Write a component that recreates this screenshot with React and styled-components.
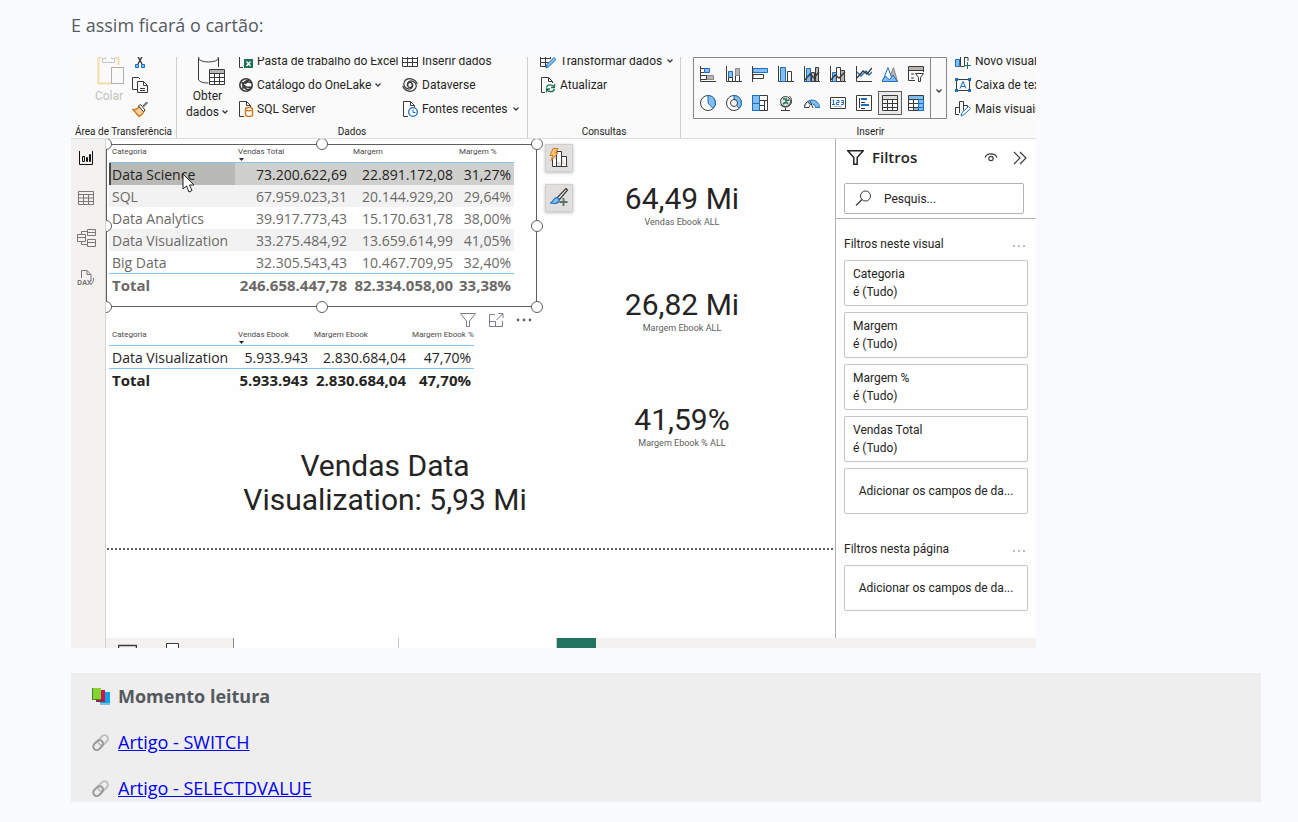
import React from 'react'
import styled, { createGlobalStyle, css } from 'styled-components'

const DARK = '#3b3a39'
const BLUE = '#1b6ec2'
const SKY = '#83beec'
const GREY = '#b8b5b2'
const GREEN = '#1e7058'
const ORANGE = '#d07a1c'

const GlobalStyle = createGlobalStyle`
  * {
    box-sizing: border-box;
  }

  body {
    margin: 0;
    background: #fafbfe;
    color: #555a5e;
    font-family: 'Open Sans', 'Noto Sans', sans-serif;
    font-size: 18px;
    line-height: 27px;
  }

  button, input {
    font: inherit;
    color: inherit;
  }

  svg {
    display: block;
    flex: none;
  }
`

const Page = styled.main`
  padding: 12px 37px 20px 71px;
`

const Intro = styled.p`
  margin: 0 0 18px;
`

const Window = styled.section`
  max-width: 965px;
  margin-bottom: 25px;
  overflow: hidden;
  background: #fefefe;
  color: #252423;
  font-family: Roboto, 'Open Sans', sans-serif;
  font-size: 12px;
  line-height: 16px;
`

/* ribbon */

const Ribbon = styled.div`
  display: flex;
  align-items: flex-end;
  height: 82px;
  overflow: hidden;
  background: #fafafa;
  border-bottom: 1px solid #dcdcdc;
`

const Group = styled.div`
  flex: none;
  display: flex;
  flex-direction: column;
  width: ${({ width }) => width}px;
  height: 89px;
  border-right: 1px solid #d0cecc;
`

const GroupBody = styled.div`
  display: flex;
  height: 72px;
  padding-left: ${({ inset }) => inset}px;
`

const GroupLabel = styled.div`
  margin-top: 4px;
  font-size: 10px;
  line-height: 13px;
  text-align: center;
  white-space: nowrap;
`

const Stack = styled.div`
  display: flex;
  flex-direction: column;
  width: ${({ width }) => (width ? `${width}px` : 'auto')};
  padding-left: ${({ inset }) => inset || 0}px;
`

const Command = styled.button`
  display: flex;
  align-items: center;
  gap: ${({ gap }) => gap || 3}px;
  height: 24px;
  padding: 0;
  border: 0;
  background: none;
  text-align: left;
  white-space: nowrap;
`

const BigCommand = styled.button`
  display: flex;
  flex-direction: column;
  align-items: center;
  justify-content: flex-start;
  gap: 3px;
  width: ${({ width }) => width}px;
  padding: 0;
  border: 0;
  background: none;
  white-space: nowrap;
  color: ${({ disabled }) => (disabled ? '#c4c2c0' : 'inherit')};

  span {
    display: flex;
    align-items: center;
    gap: 2px;
  }
`

const BigLabel = styled.div`
  display: flex;
  flex-direction: column;
  align-items: center;
`

const Gallery = styled.div`
  display: flex;
  height: 62px;
  margin: 8px 8px 0 0;
  border: 1px solid #8a8886;
`

const GalleryGrid = styled.div`
  display: grid;
  grid-template-columns: repeat(9, 26px);
  grid-template-rows: 29px 29px;
  padding: 2px 1px 0;
`

const GalleryItem = styled.button`
  display: grid;
  place-items: center;
  margin: 2px 1px 3px;
  padding: 0;
  border: 1px solid transparent;
  background: none;

  ${({ selected }) => selected && css`
    border-color: #605e5c;
    background: #e9ebe9;
  `}
`

const GalleryMore = styled.button`
  display: grid;
  place-items: center;
  width: 16px;
  padding: 6px 0 0;
  border: 0;
  border-left: 1px solid #8a8886;
  background: none;
`

/* work area */

const Workspace = styled.div`
  display: flex;
  min-height: 509px;
`

const Rail = styled.nav`
  flex: none;
  display: flex;
  flex-direction: column;
  width: 35px;
  background: #f3f2f1;
  border-right: 1px solid #d6d4d2;
`

const RailButton = styled.button`
  display: grid;
  place-items: center;
  height: 40px;
  padding: 0 4px 2px 0;
  border: 0;
  background: none;
`

const Stage = styled.div`
  flex: 1;
  display: flex;
  flex-direction: column;
  min-width: 0;
`

const Panels = styled.div`
  flex: 1;
  display: flex;
`

const Canvas = styled.div`
  flex: 1;
  min-width: 0;
  padding-top: 5px;
  overflow: hidden;
`

const Board = styled.div`
  display: flex;
  min-height: 406px;
  padding: 0 1px 30px 0;
  background: repeating-linear-gradient(90deg, transparent 0 1px, #605e5c 1px 3px, transparent 3px 4px) bottom / 100% 2px no-repeat;
`

const Visuals = styled.div`
  flex: none;
  width: 431px;
`

const SelectedVisual = styled.div`
  position: relative;
  height: 163px;
  padding-left: 2px;
  border: 1px solid #605e5c;
`

const Handle = styled.i`
  position: absolute;
  left: calc((100% + 2px) * ${({ x }) => x});
  top: calc((100% + 2px) * ${({ y }) => y});
  width: 12px;
  height: 12px;
  margin: -7px;
  border: 1px solid #605e5c;
  border-radius: 50%;
  background: #fff;
`

const Pointer = styled.svg`
  position: absolute;
  left: 75px;
  top: 28px;
`

const DataTable = styled.table`
  table-layout: fixed;
  width: ${({ width }) => width}px;
  border-collapse: separate;
  border-spacing: 0;
  color: ${({ muted }) => (muted ? '#6b6967' : '#252423')};
  font-family: 'Open Sans', 'Noto Sans', sans-serif;
  font-size: 14px;
  line-height: 21px;

  th, td {
    padding: 0 3px;
    white-space: nowrap;
    text-align: right;
    font-weight: normal;
  }

  th:first-child, td:first-child {
    text-align: left;
  }

  thead th {
    height: 18px;
    padding-top: 2px;
    border-bottom: 1px solid #85c1f7;
    color: #4b4a48;
    font-family: Roboto, sans-serif;
    font-size: 8px;
    line-height: 10px;
    text-align: left;
    vertical-align: top;
  }

  thead svg {
    margin: 1px 0 0 1px;
  }

  tbody td, tbody th {
    height: 22px;
  }

  tfoot td, tfoot th {
    height: 23px;
    border-top: 1px solid #85c1f7;
    font-size: 15px;
    font-weight: bold;
  }
`

const Row = styled.tr`
  background: ${({ striped }) => (striped ? '#f2f2f2' : 'none')};

  ${({ selected }) => selected && css`
    background: #cfcfcd;
    color: #252423;

    th {
      background: #b9b9b5;
      box-shadow: inset 2px 0 #4b4a48;
    }
  `}
`

const VisualTools = styled.div`
  display: flex;
  justify-content: flex-end;
  gap: 12px;
  margin: 5px 5px 0 0;
`

const IconButton = styled.button`
  display: grid;
  place-items: center;
  padding: 0;
  border: 0;
  background: none;
`

const EbookTable = styled.div`
  padding-left: 3px;
`

const TextCard = styled.p`
  width: 320px;
  margin: 58px 0 0 119px;
  font-size: 30px;
  line-height: 34px;
  text-align: center;
`

const Shortcuts = styled.div`
  display: flex;
  flex-direction: column;
  gap: 12px;
  margin-left: 8px;
`

const Shortcut = styled.button`
  display: grid;
  place-items: center;
  width: 28px;
  height: 28px;
  padding: 0;
  border: 1px solid #d2d0ce;
  background: #e1dfdd;
  box-shadow: 0 1px 3px rgba(0, 0, 0, 0.25);
`

const Cards = styled.div`
  display: flex;
  flex-direction: column;
  width: 218px;
  padding-top: 38px;
  text-align: center;
`

const Card = styled.div`
  height: ${({ height }) => height}px;
`

const CardValue = styled.div`
  font-size: 30px;
  line-height: 34px;
`

const CardLabel = styled.div`
  color: #605e5c;
  font-size: 9px;
  line-height: 12px;
`

/* filter pane */

const Pane = styled.aside`
  flex: none;
  width: 201px;
  border-left: 1px solid #b3b0ad;
`

const PaneHead = styled.div`
  padding: 7px 12px 4px 8px;
  border-bottom: 1px solid #b3b0ad;
`

const PaneTitle = styled.h2`
  display: flex;
  align-items: center;
  gap: 8px;
  margin: 0 -3px 14px 0;
  padding-left: 3px;
  font-family: 'Open Sans', sans-serif;
  font-size: 15px;
  font-weight: 600;
  line-height: 23px;

  button:first-of-type {
    margin: 0 7px 0 auto;
  }
`

const Search = styled.label`
  display: flex;
  align-items: center;
  gap: 12px;
  height: 31px;
  padding-left: 10px;
  border: 1px solid #b3b0ad;
  border-radius: 2px;

  input {
    width: 100px;
    padding: 0;
    border: 0;
    outline: 0;
    background: none;
  }

  input::placeholder {
    color: #252423;
    opacity: 1;
  }
`

const FilterSection = styled.section`
  display: flex;
  flex-direction: column;
  gap: 6px;
  padding: 14px 8px 0;

  & + & {
    padding-top: 24px;
  }
`

const SectionTitle = styled.h3`
  display: flex;
  justify-content: space-between;
  margin: 0;
  padding: 3px 3px 2px 0;
  font-size: 12px;
  font-weight: normal;
  line-height: 16px;
`

const FilterCard = styled.div`
  height: 46px;
  padding: 4px 8px;
  border: 1px solid #c8c6c4;
  border-radius: 2px;
  line-height: 18px;
`

const DropField = styled.div`
  display: grid;
  place-items: center;
  height: 46px;
  border: 1px solid #c8c6c4;
  border-radius: 2px;
  white-space: nowrap;
`

/* page tabs */

const Tabs = styled.div`
  display: flex;
  height: 10px;
  overflow: hidden;
  background: #f3f2f1;
`

const ViewModes = styled.div`
  display: flex;
  align-items: flex-start;
  gap: 29px;
  width: 128px;
  padding: 5px 0 0 12px;
  border-right: 1px solid #8a8886;
`

const Tab = styled.div`
  width: ${({ width }) => width}px;
  border-right: 1px solid #c8c6c4;
  background: #fefefe;
`

const NewTab = styled.button`
  width: 39px;
  padding: 0;
  border: 0;
  background: #217460;
`

/* reading list */

const Reading = styled.section`
  display: flex;
  flex-direction: column;
  gap: 19px;
  padding: 10px 20px 0;
  background: #eee;
`

const ReadingLine = styled.div`
  display: flex;
  align-items: center;
  gap: 7px;
  font-weight: ${({ strong }) => (strong ? 'bold' : 'normal')};

  a {
    color: #0000ee;
  }
`

/* drawings */

const Icon = ({ size = 16, w, h, box, children }) => (
  <svg
    width={w || size}
    height={h || size}
    viewBox={box || `0 0 ${w || size} ${h || size}`}
    fill="none"
    stroke={DARK}
    aria-hidden="true"
  >
    {children}
  </svg>
)

const Chevron = () => (
  <Icon w={8} h={6}><path d="M1.5 1.5 4 4l2.5-2.5" strokeWidth="1.3" /></Icon>
)

const PasteIcon = () => (
  <Icon w={32} h={36} box="-4 0 32 36">
    <path d="M5 8.5H1.5v26H14M18 8.5h3.500V16" stroke="#f5d9a8" strokeWidth="2" />
    <path d="M5.500 13.500V9.500h3c0-4 6-4 6 0h3v4z" fill="#fafafa" stroke="#c8c6c4" />
    <rect x="14.500" y="18.500" width="12" height="16" fill="#fafafa" stroke="#b3b0ad" />
  </Icon>
)

const CutIcon = () => (
  <Icon>
    <path d="M4.500 1 10 11M11.500 1 6 11" strokeWidth="1.400" />
    <path d="M3.500 11.500h3v3h-3zM9.500 11.500h3v3h-3z" stroke={BLUE} fill={SKY} />
  </Icon>
)

const CopyIcon = () => (
  <Icon>
    <path d="M5 12.500H.5V.5h6L8 2" />
    <path d="M5.500 4.500h6l4 4v7h-10zM11.500 4.500v4h4M8 11.500h5M8 13.500h5" fill="#fafafa" />
  </Icon>
)

const BrushIcon = () => (
  <Icon>
    <path d="M1 8.500c3 .5 5-1 6-3l5 5c-1 2-3 4-5 5z" fill="#f6cf9d" stroke={ORANGE} strokeWidth="1.400" />
    <path d="M6.500 5 8 3.500 10.500 5.500l4-4.500 1 1-4.500 4.500L13 9l-1.500 1.500z" fill="#fafafa" />
  </Icon>
)

const DatabaseIcon = () => (
  <Icon w={34} h={36} box="-6 0 34 36">
    <path d="M1.500 9v21c0 2.500 4 4 10 4M21.500 9v9" />
    <ellipse cx="11.500" cy="9" rx="10" ry="4" />
    <path d="M12.500 20.500h15v15h-15z" fill="#fff" />
    <path d="M13 21h14v3H13z" fill={GREY} stroke="none" />
    <path d="M12.500 24.500h15M12.500 28.500h15M12.500 32.500h15M17.500 24v11M22.500 24v11" />
  </Icon>
)

const ExcelIcon = () => (
  <Icon>
    <path d="M5 14.500H1.500V1H10" />
    <rect x="6" y="6" width="9" height="9" fill={GREEN} stroke="none" />
    <path d="m8.500 8.500 4 4.500M12.500 8.500l-4 4.500" stroke="#fff" strokeWidth="1.300" />
  </Icon>
)

const OneLakeIcon = () => (
  <Icon>
    <circle cx="8" cy="8" r="6.200" strokeWidth="1.600" />
    <path d="M4 5c1 5 5 6 10 5M5 12c-1-5 1-8 6-9M7 7c1-2 4-3 6-1M6 9c0 3 3 4 6 3" strokeWidth="1.500" />
  </Icon>
)

const SqlIcon = () => (
  <Icon>
    <path d="M6 15.500H1.500V.5h7l4 4V6M8.500.5v4h4" />
    <path d="M7.500 8v6c0 2 7 2 7 0V8c0-2-7-2-7 0zM7.500 8.500c0 1.600 7 1.600 7 0" stroke={ORANGE} strokeWidth="1.400" fill="#fff" />
  </Icon>
)

const GridIcon = () => (
  <Icon><path d="M.5.5h15v13H.5zM.5 5.500h15M.5 9.500h15M5.500 1v12M10.500 1v12" /></Icon>
)

// two interlocked swirls
const DataverseIcon = () => (
  <Icon>
    <g transform="rotate(35 8 8)" strokeWidth="1.200">
      <path d="M13.500 3C8-.5 1 3 1.500 8.500c.3 4 5 5.500 8 3.500 2.500-2 2-6-1-6.500-3-.3-4 3.500-1.500 4.500" />
      <path d="M2.500 13c5.500 3.500 12.500 0 12-5.500-.3-4-5-5.500-8-3.500-2.500 2-2 6 1 6.500 3 .3 4-3.500 1.500-4.500" />
    </g>
  </Icon>
)

const RecentIcon = () => (
  <Icon>
    <path d="M6 15.500H1.500V.5h7l4 4V6M8.500.5v4h4" />
    <circle cx="11" cy="11" r="4.300" stroke={BLUE} fill="#fff" strokeWidth="1.300" />
    <path d="M11 8.500V11.500h2.500" stroke={BLUE} />
  </Icon>
)

const EditGridIcon = () => (
  <Icon>
    <path d="M8 13.500H.5V.5h14V3M.5 5.500h10M.5 9.500h8M5.500 1v12M10.500 1v5" />
    <path d="m6 15 1-3.500 7-7 2 2-7 7z" stroke={BLUE} fill={SKY} />
  </Icon>
)

const RefreshIcon = () => (
  <Icon>
    <path d="M5 15.500H1.500V.5h7l4 4V6M8.500.5v4h4" />
    <path d="M6.500 10.500c1-3.500 6-3.500 7.500-.5M14.500 7v3.500H11M14.500 12c-1 3.500-6 3.500-7.500.5M6.500 15.500V12H10" stroke={GREEN} strokeWidth="1.300" />
  </Icon>
)

const NewVisualIcon = () => (
  <Icon>
    <path d="M.5 6.500h4v7h-4z" fill={SKY} stroke={BLUE} />
    <path d="M5.500.5h4v13h-4zM10 4.500h3V8" />
    <path d="M12.500 9v7M9 12.500h7" stroke={GREEN} />
  </Icon>
)

const TextBoxIcon = () => (
  <Icon>
    <path d="M1.500 2.500h13v11h-13z" />
    <path d="M0 1h3v3H0zM13 1h3v3h-3zM0 12h3v3H0zM13 12h3v3h-3z" fill={BLUE} stroke="none" />
    <path d="M5 11.500 8 4.500l3 7M6 9.500h4" stroke={BLUE} />
  </Icon>
)

const MoreVisualsIcon = () => (
  <Icon>
    <path d="M4 13.500H.5v-7h4M4.500 12V.5h4v9M9 4.500h3.500V6" />
    <path d="m6 15 1-3.500 6.500-6 2 2-6.500 6z" stroke={BLUE} fill="#fff" />
  </Icon>
)

const gallery = [
  ['Barras empilhadas', <>
    <path d="M.5 0v15.500H16" />
    <path d="M.5 2.500h4v4h-4z" fill="#fff" />
    <path d="M4.500 2.500h5v4h-5z" fill={SKY} stroke={BLUE} />
    <path d="M6.500 9.500h7v4h-7z" fill={GREY} stroke="#8a8886" />
    <path d="M.5 9.500h6v4h-6z" fill="#fff" />
  </>],
  ['Colunas empilhadas', <>
    <path d="M.5 0v15.500H16" />
    <path d="M2.500 5.500h4v6h-4z" fill={SKY} stroke={BLUE} />
    <path d="M2.500 11.500h4v4h-4zM9.500 9.500h4v6h-4z" fill="#fff" />
    <path d="M9.500 2.500h4v7h-4z" fill={GREY} stroke="#8a8886" />
  </>],
  ['Barras clusterizadas', <>
    <path d="M1 2.500h14.500v4H1z" fill={SKY} stroke={BLUE} />
    <path d="M1 8.500h10.500v4H1z" fill="#fff" />
    <path d="M.5 0v16" />
  </>],
  ['Colunas clusterizadas', <>
    <path d="M.5 0v15.500H16" />
    <path d="M2.500 1.500h5v14h-5z" fill={SKY} stroke={BLUE} />
    <path d="M9.500 5.500h4v10h-4z" fill="#fff" />
  </>],
  ['Linha e coluna empilhada', <>
    <path d="M.5 0v15.500H16" />
    <path d="M2.500 2.500h4v13h-4z" fill={SKY} stroke={BLUE} />
    <path d="M7.500 6.500h3v9h-3zM11.500 1.500h3v14h-3z" fill={GREY} />
    <path d="m1 14 5-6 4 4 5-6" strokeWidth="1.400" />
  </>],
  ['Linha e coluna clusterizada', <>
    <path d="M.5 0v15.500H16" />
    <path d="M2.500 6.500h4v9h-4z" fill={SKY} stroke={BLUE} />
    <path d="M6.500 1.500h4v14h-4z" fill="#fff" />
    <path d="M10.500 4.500h4v11h-4z" fill={GREY} />
    <path d="m1 14 4-5 4 3 6-6" strokeWidth="1.400" />
  </>],
  ['Linhas', <>
    <path d="M.5 0v15.500H16" />
    <path d="m1 6 4 4 5-5 3 4 3-3" stroke={BLUE} strokeWidth="1.300" />
    <path d="m1 12 6-7 4 3 5-6" strokeWidth="1.300" />
  </>],
  ['Área', <>
    <path d="M6 15 11.500 1.500 15.500 15.500" fill={GREY} stroke="#8a8886" />
    <path d="m.5 15.500 5.500-14 5 14z" fill="#fff" stroke={BLUE} />
    <path d="m.5 14 3-4 4 4 3.500-5 4.500 6.500H.5z" fill={SKY} stroke={BLUE} />
  </>],
  ['Segmentação', <>
    <path d="M7 14.500H.5V.5h15V6M.5 4.500h15" />
    <path d="M1 1h14v3H1z" fill={GREY} stroke="none" />
    <path d="M3.500 7.500h2v1h-2zM3.500 11.500h2v1h-2z" stroke="#8a8886" />
    <path d="M7.500 7.500h8l-3 4v4h-2v-4z" fill="#fff" />
  </>],
  ['Pizza', <>
    <circle cx="8" cy="8" r="7.500" fill="#fff" />
    <path d="M8 8V.5a7.500 7.500 0 0 1 5 13z" fill={SKY} stroke={BLUE} />
  </>],
  ['Rosca', <>
    <circle cx="8" cy="8" r="7.500" fill="#fff" />
    <path d="M8 .5a7.500 7.500 0 0 1 5 13l-2.500-3A4 4 0 0 0 8 4z" fill={SKY} stroke={BLUE} />
    <circle cx="8" cy="8" r="3.500" fill="#fafafa" />
  </>],
  ['Mapa de árvore', <>
    <path d="M.5.5h15v15H.5z" fill="#fff" />
    <path d="M.5.5h7v15h-7z" fill={SKY} stroke={BLUE} />
    <path d="M.5 8.500h7" stroke={BLUE} />
    <path d="M7.500 5.500h8M12.500 6v9M7.500 10.500h5" />
  </>],
  ['Mapa', <>
    <circle cx="7.500" cy="6.500" r="5" fill="#dfe6e2" />
    <path d="M5 4h3v2l3-1M5 9l3-2 2 2" stroke={GREEN} strokeWidth="1.600" />
    <path d="M11.500 1c4 4 2 11-4 11-2 0-4-.5-5.500-2.500M7.500 12.500v3M3 15.500h9" />
  </>],
  ['Medidor', <>
    <path d="M.5 12.500a7.500 7.500 0 0 1 15 0h-4a3.500 3.500 0 0 0-3-3.500" fill={SKY} stroke={BLUE} />
    <path d="M.5 12.500a7.500 7.500 0 0 1 3-6l3 3.500a3 3 0 0 0-1.500 2.500z" fill="#fff" />
    <path d="m6 6 3 7" />
  </>],
  ['Cartão', <>
    <path d="M.5 2.500h15v11H.5z" fill="#fff" />
    <path d="M2.500 5.500 3.500 5v4.500M2 9.500h3M6.500 5.500H9v2H6.500v2H9M11 5.500h2.500v4H11M11.500 7.500h2" stroke={BLUE} />
    <path d="M4 11.500h8" stroke={GREY} />
  </>],
  ['Cartão de várias linhas', <>
    <path d="M.5.5h15v15H.5z" fill="#fff" />
    <path d="M5 4h6M5 10h8" stroke={BLUE} strokeWidth="2" />
    <path d="M3.500 3v10M5 7.500h4M5 13.500h4" />
  </>],
  ['Tabela', <>
    <path d="M.5.5h15v15H.5z" fill="#fff" />
    <path d="M1 1h14v3H1z" fill="#deddda" stroke="none" />
    <path d="M.5 4.500h15M.5 8.500h15M.5 12.500h15M5.500 4v11M10.500 4v11" />
  </>],
  ['Matriz', <>
    <path d="M.5.5h15v15H.5z" fill="#fff" />
    <path d="M1 1h14v3H1zM11 4h4v11h-4zM6 12h5v3H6z" fill={SKY} stroke="none" />
    <path d="M.5 4.500h15M.5 8.500h15M.5 12.500h15M5.500 4v11M10.500 4v11" />
    <path d="M10.500 15.500v-11h5v11zM10.500 8.500h5M10.500 12.500h5" stroke={BLUE} />
  </>]
]

const FunnelIcon = () => (
  <Icon w={17} h={15}><path d="M.8.8h15.400l-6 6.700v6.700H6.800V7.500z" strokeWidth="1.500" stroke="#252423" /></Icon>
)

const ThinFunnelIcon = () => (
  <Icon><path d="M.5 1.500h15L9.500 9v5.500h-3V9z" stroke="#807c84" /></Icon>
)

const FocusIcon = () => (
  <Icon><path d="M7 2.500H1.500v12h13V9M1.500 9.500h6v5M8.500 8l6-6M10.500 1.500h4.500V6" stroke="#807c84" /></Icon>
)

const DotsIcon = ({ small }) => (
  <Icon w={small ? 12 : 16} h={16}>
    {(small ? [1, 6, 11] : [2, 8, 14]).map(x => (
      <circle key={x} cx={x} cy={small ? 10 : 8} r={small ? 0.8 : 1.4} fill="#6a6670" stroke="none" />
    ))}
  </Icon>
)

const EyeIcon = () => (
  <Icon w={14} h={10}>
    <path d="M1 4.500C3-.3 11-.3 13 4.500" strokeWidth="1.200" />
    <circle cx="7" cy="5.500" r="2.200" strokeWidth="1.200" />
  </Icon>
)

const CollapseIcon = () => (
  <Icon w={14} h={14}><path d="m1 1 6 6-6 6M7 1l6 6-6 6" strokeWidth="1.200" /></Icon>
)

const SearchIcon = () => (
  <Icon w={17} h={17}>
    <circle cx="10.500" cy="6" r="5" />
    <path d="M7 9.500 1 15.500" strokeWidth="1.200" />
  </Icon>
)

const ReportIcon = () => (
  <Icon><path d="M1.500 1v13.500h13V1M4.500 6.500h2v5h-2zM8.500 7.500h1v4h-1zM11.500 4.500h1v7h-1z" stroke="#111" /></Icon>
)

const TableViewIcon = () => (
  <Icon><path d="M.5 1.500h15v13H.5zM.5 4.500h15M.5 8h15M.5 11.500h15M5.500 5v9M10.500 5v9" stroke="#7a7876" /></Icon>
)

const ModelIcon = () => (
  <Icon w={19} h={18}>
    <path d="M.5 5.500h8v7h-8zM.5 8.500h8M10.500.5h8v6h-8zM10.500 3.500h8M10.500 10.500h8v7h-8zM10.500 13.500h8M4.500 5.500v-3h6M4.500 12.500v3h6" stroke="#7a7876" />
  </Icon>
)

const DaxLabel = styled.text`
  font-family: 'Open Sans', sans-serif;
  font-size: 7px;
  font-weight: bold;
`

const DaxIcon = () => (
  <Icon w={18} h={18}>
    <path d="M4.500 9V1.500H10l4 4V12M10 1.500v4h4M14 15c2-1 2.500-3 2.500-6" stroke="#7a7876" />
    <DaxLabel x="0" y="16" fill="#7a7876" stroke="none">DAX</DaxLabel>
  </Icon>
)

const BuildIcon = () => (
  <Icon w={20} h={20}>
    <path d="M3.500 10v8.500h15M7.500 18V3.500h5V18M12.500 8.500h5v10" fill="#fff" />
    <path d="M4 .5h5L6.500 5H9l-7 7.500L4 7.500H1z" fill="#f7c66e" stroke={ORANGE} />
  </Icon>
)

const FormatIcon = () => (
  <Icon w={20} h={20}>
    <path d="m8 10 9-9.500 1.500 1.500L10 12" fill="#fff" strokeWidth="1.200" />
    <path d="M1 15c3 0 3-5 6.500-5.500 4 1 3.500 5.500-1.500 6z" fill={SKY} stroke={BLUE} strokeWidth="1.200" />
    <path d="M14.500 10v8M10.500 14h8" stroke="#5c7064" strokeWidth="1.800" />
  </Icon>
)

const SortMark = () => (
  <Icon w={5} h={3}><path d="M0 0h5L2.500 3z" fill="#252423" stroke="none" /></Icon>
)

const BooksIcon = () => (
  <Icon w={20} h={18}>
    <g stroke="none">
      <path d="M9 5h10v12H9z" fill="#8ab9dc" />
      <path d="M9 4h10v11H9z" fill="#07a4ee" />
      <path d="M5 2h9v12H5z" fill="#8c2848" />
      <path d="M5 2h9v10H5z" fill="#cd1550" />
      <path d="M1 0h9v12H1z" fill="#4a8034" />
      <path d="M2 0h8v11H2z" fill="#84d530" />
    </g>
  </Icon>
)

const LinkIcon = () => (
  <Icon w={20} h={20}>
    <g strokeWidth="2" transform="rotate(-45 10 10)">
      <rect x="8" y="6" width="11" height="7" rx="3.500" stroke="#c0c0c0" />
      <rect x="1" y="6" width="11" height="7" rx="3.500" stroke="#9a9a9a" />
    </g>
  </Icon>
)

/* data */

const categories = [
  ['Data Science', '73.200.622,69', '22.891.172,08', '31,27%'],
  ['SQL', '67.959.023,31', '20.144.929,20', '29,64%'],
  ['Data Analytics', '39.917.773,43', '15.170.631,78', '38,00%'],
  ['Data Visualization', '33.275.484,92', '13.659.614,99', '41,05%'],
  ['Big Data', '32.305.543,43', '10.467.709,95', '32,40%']
]

const cards = [
  ['64,49 Mi', 'Vendas Ebook ALL', 106],
  ['26,82 Mi', 'Margem Ebook ALL', 115],
  ['41,59%', 'Margem Ebook % ALL', 46]
]

const filters = ['Categoria', 'Margem', 'Margem %', 'Vendas Total']

const handles = [
  [0, 0], [0.5, 0], [1, 0],
  [0, 0.5], [1, 0.5],
  [0, 1], [0.5, 1], [1, 1]
]

const Report = ({ columns, widths, rows, total, muted, selected }) => (
  <DataTable width={widths.reduce((a, b) => a + b)} muted={muted ? 1 : undefined}>
    <colgroup>
      {widths.map((w, i) => <col key={i} width={w} />)}
    </colgroup>
    <thead>
      <tr>
        {columns.map((c, i) => (
          <th key={c} scope="col">{c}{i === 1 && <SortMark />}</th>
        ))}
      </tr>
    </thead>
    <tbody>
      {rows.map(([name, ...values], i) => (
        <Row key={name} selected={i === selected} striped={i % 2 ? 1 : undefined}>
          <th scope="row">{name}</th>
          {values.map(v => <td key={v}>{v}</td>)}
        </Row>
      ))}
    </tbody>
    <tfoot>
      <tr>
        <th scope="row">Total</th>
        {total.map(v => <td key={v}>{v}</td>)}
      </tr>
    </tfoot>
  </DataTable>
)

const RibbonBar = () => (
  <Ribbon>
    <Group width={106}>
      <GroupBody inset={15}>
        <BigCommand width={46} disabled>
          <PasteIcon />
          Colar
        </BigCommand>
        <Stack>
          <Command aria-label="Recortar"><CutIcon /></Command>
          <Command aria-label="Copiar"><CopyIcon /></Command>
          <Command aria-label="Pincel de formatação"><BrushIcon /></Command>
        </Stack>
      </GroupBody>
      <GroupLabel>Área de Transferência</GroupLabel>
    </Group>

    <Group width={351}>
      <GroupBody inset={9}>
        <BigCommand width={43}>
          <DatabaseIcon />
          <BigLabel>
            <span>Obter</span>
            <span>dados <Chevron /></span>
          </BigLabel>
        </BigCommand>
        <Stack width={173} inset={9}>
          <Command><ExcelIcon />Pasta de trabalho do Excel</Command>
          <Command><OneLakeIcon />Catálogo do OneLake <Chevron /></Command>
          <Command><SqlIcon />SQL Server</Command>
        </Stack>
        <Stack>
          <Command gap={4}><GridIcon />Inserir dados</Command>
          <Command gap={4}><DataverseIcon />Dataverse</Command>
          <Command gap={4}><RecentIcon />Fontes recentes <Chevron /></Command>
        </Stack>
      </GroupBody>
      <GroupLabel>Dados</GroupLabel>
    </Group>

    <Group width={153}>
      <GroupBody inset={12}>
        <Stack>
          <Command gap={4}><EditGridIcon />Transformar dados <Chevron /></Command>
          <Command gap={4}><RefreshIcon />Atualizar</Command>
        </Stack>
      </GroupBody>
      <GroupLabel>Consultas</GroupLabel>
    </Group>

    <Group width={380}>
      <GroupBody inset={12}>
        <Gallery>
          <GalleryGrid>
            {gallery.map(([name, drawing]) => (
              <GalleryItem key={name} aria-label={name} selected={name === 'Tabela'}>
                <Icon>{drawing}</Icon>
              </GalleryItem>
            ))}
          </GalleryGrid>
          <GalleryMore aria-label="Mais opções"><Chevron /></GalleryMore>
        </Gallery>
        <Stack>
          <Command gap={4}><NewVisualIcon />Novo visual</Command>
          <Command gap={4}><TextBoxIcon />Caixa de texto</Command>
          <Command gap={4}><MoreVisualsIcon />Mais visuais</Command>
        </Stack>
      </GroupBody>
      <GroupLabel>Inserir</GroupLabel>
    </Group>
  </Ribbon>
)

const FilterPane = () => (
  <Pane>
    <PaneHead>
      <PaneTitle>
        <FunnelIcon />
        Filtros
        <IconButton aria-label="Mostrar"><EyeIcon /></IconButton>
        <IconButton aria-label="Recolher"><CollapseIcon /></IconButton>
      </PaneTitle>
      <Search>
        <SearchIcon />
        <input type="text" placeholder="Pesquis..." aria-label="Pesquisar" />
      </Search>
    </PaneHead>
    <FilterSection>
      <SectionTitle>Filtros neste visual <DotsIcon small /></SectionTitle>
      {filters.map(f => (
        <FilterCard key={f}>
          <div>{f}</div>
          <div>é (Tudo)</div>
        </FilterCard>
      ))}
      <DropField>Adicionar os campos de da...</DropField>
    </FilterSection>
    <FilterSection>
      <SectionTitle>Filtros nesta página <DotsIcon small /></SectionTitle>
      <DropField>Adicionar os campos de da...</DropField>
    </FilterSection>
  </Pane>
)

export default () => (
  <Page>
    <GlobalStyle />
    <Intro>E assim ficará o cartão:</Intro>

    <Window>
      <RibbonBar />
      <Workspace>
        <Rail>
          <RailButton aria-label="Relatório"><ReportIcon /></RailButton>
          <RailButton aria-label="Tabela"><TableViewIcon /></RailButton>
          <RailButton aria-label="Modelo"><ModelIcon /></RailButton>
          <RailButton aria-label="Consulta DAX"><DaxIcon /></RailButton>
        </Rail>

        <Stage>
          <Panels>
            <Canvas>
              <Board>
                <Visuals>
                  <SelectedVisual>
                    <Report
                      muted
                      selected={0}
                      columns={['Categoria', 'Vendas Total', 'Margem', 'Margem %']}
                      widths={[126, 115, 106, 58]}
                      rows={categories}
                      total={['246.658.447,78', '82.334.058,00', '33,38%']}
                    />
                    {handles.map(([x, y]) => <Handle key={`${x}-${y}`} x={x} y={y} />)}
                    <Pointer width="13" height="20" viewBox="0 0 13 20" aria-hidden="true">
                      <path d="M1 1v15l3.500-3L7 19l3-1.500L7.500 12H12z" fill="#fff" stroke="#222" />
                    </Pointer>
                  </SelectedVisual>
                  <VisualTools>
                    <IconButton aria-label="Filtros"><ThinFunnelIcon /></IconButton>
                    <IconButton aria-label="Modo de foco"><FocusIcon /></IconButton>
                    <IconButton aria-label="Mais opções"><DotsIcon /></IconButton>
                  </VisualTools>
                  <EbookTable>
                    <Report
                      columns={['Categoria', 'Vendas Ebook', 'Margem Ebook', 'Margem Ebook %']}
                      widths={[126, 76, 98, 65]}
                      rows={[['Data Visualization', '5.933.943', '2.830.684,04', '47,70%']]}
                      total={['5.933.943', '2.830.684,04', '47,70%']}
                    />
                  </EbookTable>
                  <TextCard>Vendas Data Visualization: 5,93 Mi</TextCard>
                </Visuals>

                <Shortcuts>
                  <Shortcut aria-label="Criar visual"><BuildIcon /></Shortcut>
                  <Shortcut aria-label="Formatar visual"><FormatIcon /></Shortcut>
                </Shortcuts>

                <Cards>
                  {cards.map(([value, label, height]) => (
                    <Card key={label} height={height}>
                      <CardValue>{value}</CardValue>
                      <CardLabel>{label}</CardLabel>
                    </Card>
                  ))}
                </Cards>
              </Board>
            </Canvas>
            <FilterPane />
          </Panels>

          <Tabs>
            <ViewModes>
              <Icon w={19} h={14}><path d="M.5 2.500h18v11H.5z" strokeWidth="1.500" /></Icon>
              <Icon w={13} h={18}><path d="M.5.5h12v17H.5z" fill="#fff" /></Icon>
            </ViewModes>
            <Tab width={165} />
            <Tab width={158} />
            <NewTab aria-label="Nova página" />
          </Tabs>
        </Stage>
      </Workspace>
    </Window>

    <Reading>
      <ReadingLine strong={1}><BooksIcon />Momento leitura</ReadingLine>
      <ReadingLine><LinkIcon /><a href="#switch">Artigo - SWITCH</a></ReadingLine>
      <ReadingLine><LinkIcon /><a href="#selectdvalue">Artigo - SELECTDVALUE</a></ReadingLine>
    </Reading>
  </Page>
)
